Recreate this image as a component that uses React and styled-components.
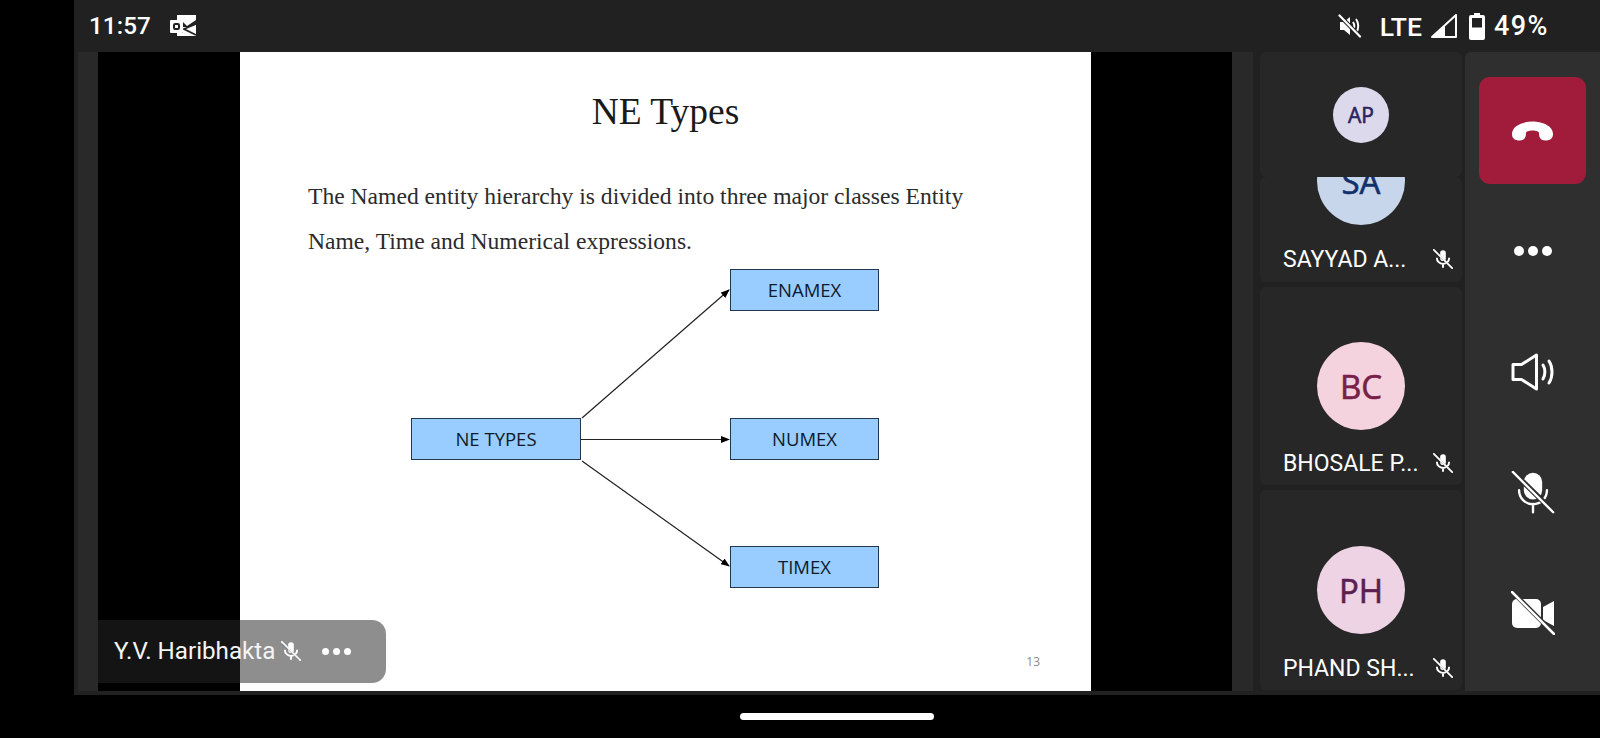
import React from "react";
import styled, { createGlobalStyle } from "styled-components";

const Global = createGlobalStyle`
  html, body { margin: 0; padding: 0; background: #000; }
  body { font-family: Roboto, "Liberation Sans", sans-serif; overflow: hidden; }
`;

const Page = styled.div`
  width: 1600px; height: 738px; padding-left: 74px; box-sizing: border-box;
  display: flex; flex-direction: column; background: #000;
`;
const StatusBar = styled.header`
  height: 52px; flex: none; background: #212121; color: #fff;
  display: flex; align-items: center; justify-content: space-between;
  padding: 0 51px 0 15px;
`;
const StatusGroup = styled.div`
  display: flex; align-items: center;
`;
const Clock = styled.span`
  font-size: 24.2px; font-weight: 500; letter-spacing: .1px;
`;
const StatusText = styled.span`
  font-size: ${p => p.$size}px; font-weight: 500; letter-spacing: ${p => p.$track || 0}px;
`;
const Main = styled.main`
  height: 639px; flex: none; display: flex; background: #212121;
`;
const Rail = styled.div`
  width: ${p => p.$w}px; margin-left: ${p => p.$ml || 0}px; flex: none; background: #292929;
`;
const Stage = styled.section`
  position: relative; width: 1134px; flex: none; background: #000; display: flex; justify-content: center; padding-left: 1px; box-sizing: border-box;
`;
const Slide = styled.article`
  width: 851px; height: 100%; background: #fff; display: flex; flex-direction: column;
  font-family: "Liberation Serif", serif; color: #1c1c1c;
`;
const SlideTitle = styled.h1`
  margin: 38px 0 0; font-size: 37.5px; line-height: 44px; font-weight: 400; text-align: center; color: #1a1a1a;
`;
const SlideText = styled.p`
  margin: 40px 0 0 68px; font-size: 23.6px; line-height: 45px; width: 700px; color: #2b2b2b;
`;
const Diagram = styled.div`
  position: relative; width: 470px; height: 320px; margin: 5px 0 0 171px; flex: none;
`;
const Node = styled.div`
  position: absolute; left: ${p => p.$x}px; top: ${p => p.$y}px; width: ${p => p.$w}px; height: 42px;
  box-sizing: border-box; background: #99ccff; border: 1px solid #22364f; padding-bottom: 1px;
  display: flex; align-items: center; justify-content: center;
  font-family: "Open Sans", sans-serif; font-size: 18.5px; color: #0e1a2c;
`;
const Arrows = styled.svg`
  position: absolute; left: 0; top: 0; overflow: visible;
`;
const PageNumber = styled.span`
  margin-top: auto; align-self: flex-end; margin-right: 51px; margin-bottom: 21px;
  font-family: "Open Sans", sans-serif; font-size: 12px; color: #8a8a8a;
`;
const NameTag = styled.div`
  position: absolute; left: 0; bottom: 8px; width: 288px; height: 63px; box-sizing: border-box;
  background: rgba(38,38,38,.52); border-radius: 0 14px 14px 0; color: #fff;
  display: flex; align-items: center; padding: 0 0 1px 16px;
`;
const TagName = styled.span`
  font-size: 24.2px; color: #f4f4f4; width: 167px; white-space: nowrap;
`;
const TagDots = styled.div`
  display: flex; gap: 4px; margin-left: 21px;
`;
const Dot = styled.i`
  width: ${p => p.$s}px; height: ${p => p.$s}px; border-radius: 50%; background: #fff; display: block;
`;
const TileColumn = styled.aside`
  width: 202px; margin-left: 7px; flex: none; display: flex; flex-direction: column;
`;
const Tile = styled.div`
  position: relative; z-index: ${p => p.$top ? 1 : 0}; height: ${p => p.$h}px; margin-top: ${p => p.$mt || 0}px;
  background: #272727; border-radius: 6px; overflow: hidden; flex: none;
  display: flex; flex-direction: column; align-items: center;
`;
const Avatar = styled.div`
  width: ${p => p.$s}px; height: ${p => p.$s}px; margin-top: ${p => p.$mt}px; flex: none; border-radius: 50%;
  background: ${p => p.$bg}; color: ${p => p.$fg};
  display: flex; align-items: center; justify-content: center;
  font-family: "Open Sans", sans-serif; font-weight: 400; font-size: ${p => p.$fs}px;
  -webkit-text-stroke: .6px currentColor;
`;
const NameRow = styled.div`
  margin-top: auto; width: 100%; height: 28px; margin-bottom: ${p => p.$mb}px; box-sizing: border-box;
  padding: 0 9px 0 23px; display: flex; align-items: center; justify-content: space-between; color: #fff;
`;
const TileName = styled.span`
  font-size: 23px; white-space: nowrap;
`;
const Controls = styled.nav`
  width: 135px; margin-left: 3px; flex: none; background: #2f2f2f; border-radius: 6px 0 0 0;
  display: flex; flex-direction: column; align-items: center; color: #fff;
`;
const HangUp = styled.button`
  width: 107px; height: 107px; margin-top: 25px; margin-bottom: 7px; flex: none; border: 0; border-radius: 11px; background: #a01c3a;
  display: flex; align-items: center; justify-content: center; padding: 0;
`;
const ControlSlot = styled.div`
  height: 120.7px; width: 100%; flex: none; display: flex; align-items: center; justify-content: center; gap: 4px;
`;
const BottomStrip = styled.div`
  height: 4px; flex: none; background: #212121;
`;
const HomeArea = styled.div`
  flex: 1; display: flex; justify-content: center; padding-top: 18px;
`;
const HomePill = styled.div`
  width: 194px; height: 7px; border-radius: 4px; background: #fff;
`;

const MicOff = () => (
  <svg width="44" height="44" viewBox="0 0 24 24" fill="none" stroke="#fff">
    <rect x="7" y="1" width="10" height="14.500" rx="5" fill="#fff" stroke="none" />
    <path d="M4.400 10.500c0 4.300 3.300 7.600 7.600 7.600s7.600-3.300 7.600-7.600M12 18v4.500" strokeWidth="1.300" strokeLinecap="round" />
    <path d="M1.500 1 22.500 21.500" stroke="#2f2f2f" strokeWidth="2.900" />
    <path d="M1 .5 23 22.500" strokeWidth="1.300" strokeLinecap="round" />
  </svg>
);

const SmallMic = () => (
  <svg width="20" height="20" viewBox="0 0 24 24" fill="none" stroke="#fff">
    <rect x="8.600" y="1.500" width="6.800" height="13" rx="3.400" fill="#fff" stroke="none" />
    <path d="M4.600 10.500c0 4.300 3.300 7.400 7.400 7.400s7.400-3.100 7.400-7.400M12 18v4.500" strokeWidth="2.300" />
    <path d="M2 2.500 22 22" stroke="#272727" strokeWidth="2" />
    <path d="M1 1 23 23" strokeWidth="2.200" strokeLinecap="round" />
  </svg>
);

const OutlookIcon = () => (
  <svg width="27" height="22" viewBox="0 0 27 22" style={{ marginLeft: 19 }}>
    <path d="M7 0h19v5L17 11 12 6H7zM7 18h6v-6l13 0v9H7z" fill="#fff" />
    <path d="M13 12h5l8-3v9l-8-4z" fill="#fff" />
    <path d="M26 9 14 14l12 6" fill="none" stroke="#212121" strokeWidth="1.800" />
    <rect x="0" y="5" width="13" height="13" rx="1" fill="#fff" />
    <rect x="4" y="9" width="5" height="5" rx="1.200" fill="none" stroke="#212121" strokeWidth="2" />
  </svg>
);

const MuteIcon = () => (
  <svg width="24" height="24" viewBox="0 0 24 24" fill="none" stroke="#fff" style={{ marginRight: 18 }}>
    <path d="M2 8h4l6-5v18l-6-5H2z" fill="#fff" stroke="none" />
    <path d="M15 8c1.500 2.300 1.500 5.700 0 8M18 5c3 4 3 10 0 14" strokeWidth="2" />
    <path d="M1.500 1.500 22 22.500" stroke="#212121" strokeWidth="4" />
    <path d="M1.500 1.500 22 22.500" strokeWidth="2.200" strokeLinecap="round" />
  </svg>
);

const SignalIcon = () => (
  <svg width="26" height="24" viewBox="0 0 26 24" fill="none" style={{ marginLeft: 9, marginRight: 12 }}>
    <path d="M1 23 25 1v22z" stroke="#fff" strokeWidth="2" strokeLinejoin="round" />
    <path d="M1 23 14 11v12z" fill="#fff" />
  </svg>
);

const BatteryIcon = () => (
  <svg width="16" height="27" viewBox="0 0 16 27" style={{ marginRight: 9 }}>
    <path d="M5 0h6v2h3a2 2 0 0 1 2 2v21a2 2 0 0 1-2 2H2a2 2 0 0 1-2-2V4a2 2 0 0 1 2-2h3z" fill="#fff" />
    <rect x="3" y="5" width="10" height="9.500" fill="#212121" />
  </svg>
);

const PhoneIcon = () => (
  <svg width="43" height="20" viewBox="0 0 42 20">
    <path d="M0.500 13C0.500 4.500 12 0.500 21 0.500S41.500 4.500 41.500 13c0 4.500-3 6.500-7.500 6.500-5 0-6.500-3-6.500-7.500 0-1.500-3-2.500-6.500-2.500s-6.500 1-6.500 2.500c0 4.500-1.500 7.500-6.500 7.500C3.500 19.500 0.500 17.500 0.500 13z" fill="#fff" />
  </svg>
);

const SpeakerIcon = () => (
  <svg width="43" height="38" viewBox="0 0 43 38" fill="none" stroke="#fff" strokeWidth="3" strokeLinejoin="round" strokeLinecap="round">
    <path d="M2 11.500h8.500L25.500 2v34L10.500 26.500H2z" />
    <path d="M32 12c2.500 4 2.500 10 0 14M38 8c4 6 4 16 0 22" />
  </svg>
);

const VideoOff = () => (
  <svg width="44" height="44" viewBox="0 0 44 44" fill="none">
    <rect x="1" y="8" width="29" height="29" rx="5" fill="#fff" />
    <path d="M32 16l11-6v25l-11-6z" fill="#fff" />
    <path d="M2 1.500 43 42.500" stroke="#2f2f2f" strokeWidth="4.500" />
    <path d="M1 1 43 43" stroke="#fff" strokeWidth="2.500" strokeLinecap="round" />
  </svg>
);

const people = [
  { key: "sa", h: 105, mt: 0, av: -40, mb: 9, bg: "#c7d6ea", fg: "#12306a", init: "SA", name: "SAYYAD A..." },
  { key: "bc", h: 198, mt: 5, av: 55, mb: 8, bg: "#f4d2de", fg: "#7a2046", init: "BC", name: "BHOSALE P..." },
  { key: "ph", h: 200, mt: 5, av: 56, mb: 8, bg: "#eed3e5", fg: "#5a2050", init: "PH", name: "PHAND SH..." },
];

const nodes = [
  { label: "NE TYPES", x: 0, y: 149, w: 170 },
  { label: "ENAMEX", x: 319, y: 0, w: 149 },
  { label: "NUMEX", x: 319, y: 149, w: 149 },
  { label: "TIMEX", x: 319, y: 277, w: 149 },
];

export default function App() {
  return (
    <Page>
      <Global />
      <StatusBar>
        <StatusGroup>
          <Clock>11:57</Clock>
          <OutlookIcon />
        </StatusGroup>
        <StatusGroup>
          <MuteIcon />
          <StatusText $size={26.5}>LTE</StatusText>
          <SignalIcon />
          <BatteryIcon />
          <StatusText $size={27} $track={1.500}>49%</StatusText>
        </StatusGroup>
      </StatusBar>
      <Main>
        <Rail $w={20} $ml={4} />
        <Stage>
          <Slide>
            <SlideTitle>NE Types</SlideTitle>
            <SlideText>
              The Named entity hierarchy is divided into three major classes Entity
              <br />
              Name, Time and Numerical expressions.
            </SlideText>
            <Diagram>
              <Arrows width="470" height="320" viewBox="0 0 470 320">
                <defs>
                  <marker id="head" markerWidth="9" markerHeight="7" refX="8" refY="3.500" orient="auto" markerUnits="userSpaceOnUse">
                    <path d="M0 0 9 3.500 0 7z" fill="#000" />
                  </marker>
                </defs>
                <g stroke="#222" strokeWidth="1.200">
                  <line x1="171" y1="149" x2="318" y2="21" markerEnd="url(#head)" />
                  <line x1="170" y1="170.500" x2="318" y2="170.500" markerEnd="url(#head)" />
                  <line x1="171" y1="192" x2="318" y2="297" markerEnd="url(#head)" />
                </g>
              </Arrows>
              {nodes.map(n => (
                <Node key={n.label} $x={n.x} $y={n.y} $w={n.w}>{n.label}</Node>
              ))}
            </Diagram>
            <PageNumber>13</PageNumber>
          </Slide>
          <NameTag>
            <TagName>Y.V. Haribhakta</TagName>
            <SmallMic />
            <TagDots>
              <Dot $s={7} /><Dot $s={7} /><Dot $s={7} />
            </TagDots>
          </NameTag>
        </Stage>
        <Rail $w={21} />
        <TileColumn>
          <Tile $h={125} $top>
            <Avatar $s={56} $mt={35} $bg="#dcd9ec" $fg="#2a2460" $fs={21}>AP</Avatar>
          </Tile>
          {people.map(p => (
            <Tile key={p.key} $h={p.h} $mt={p.mt}>
              <Avatar $s={88} $mt={p.av} $bg={p.bg} $fg={p.fg} $fs={33}>{p.init}</Avatar>
              <NameRow $mb={p.mb}>
                <TileName>{p.name}</TileName>
                <SmallMic />
              </NameRow>
            </Tile>
          ))}
        </TileColumn>
        <Controls>
          <HangUp aria-label="Leave"><PhoneIcon /></HangUp>
          <ControlSlot><Dot $s={10} /><Dot $s={10} /><Dot $s={10} /></ControlSlot>
          <ControlSlot><SpeakerIcon /></ControlSlot>
          <ControlSlot><MicOff /></ControlSlot>
          <ControlSlot><VideoOff /></ControlSlot>
        </Controls>
      </Main>
      <BottomStrip />
      <HomeArea><HomePill /></HomeArea>
    </Page>
  );
}
